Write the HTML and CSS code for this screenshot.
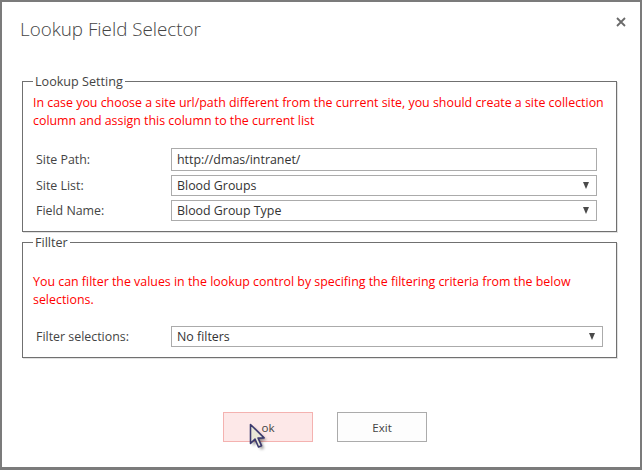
FILE: index.html
```
<!DOCTYPE html>
<html lang="en">
<head>
<meta charset="utf-8">
<title>Lookup Field Selector</title>
<link rel="stylesheet" href="styles.css">
</head>
<body>
<div class="dialog">
  <div class="header">
    <h1 class="title">Lookup Field Selector</h1>
    <button class="close" type="button" aria-label="Close">
      <svg width="10" height="10" viewBox="0 0 10 10"><path d="M1 1L9 9M9 1L1 9" stroke="#6a6a6a" stroke-width="1.8" fill="none"/></svg>
    </button>
  </div>

  <fieldset class="group group-lookup">
    <legend class="legend">Lookup Setting</legend>
    <p class="note note-lookup">In case you choose a site url/path different from the current site, you should create a site collection column and assign this column to the current list</p>
    <div class="form form-lookup">
      <div class="label">Site Path:</div>
      <div class="field field-text">http://dmas/intranet/</div>
      <div class="label">Site List:</div>
      <div class="field field-select"><span>Blood Groups</span><span class="arrow"></span></div>
      <div class="label">Field Name:</div>
      <div class="field field-select"><span>Blood Group Type</span><span class="arrow"></span></div>
    </div>
  </fieldset>

  <fieldset class="group group-filter">
    <legend class="legend">Fillter</legend>
    <p class="note note-filter">You can filter the values in the lookup control by specifing the filtering criteria from the below selections.</p>
    <div class="form form-filter">
      <div class="label">Filter selections:</div>
      <div class="field field-select"><span>No filters</span><span class="arrow"></span></div>
    </div>
  </fieldset>

  <div class="actions">
    <button class="btn btn-ok" type="button">ok</button>
    <button class="btn btn-exit" type="button">Exit</button>
  </div>

  <svg class="cursor" width="22" height="32" viewBox="0 0 22 32">
    <defs>
      <filter id="sh" x="-50%" y="-50%" width="200%" height="200%">
        <feGaussianBlur stdDeviation="1.6"/>
      </filter>
    </defs>
    <path d="M4 4 L4 23 L8.5 18.6 L12 26.5 L15 25.2 L11.6 17.6 L17.6 17.4 Z" fill="#000" opacity="0.45" filter="url(#sh)"/>
    <path d="M1.5 1.5 L1.5 20.5 L6 16.1 L9.5 24 L12.5 22.7 L9.1 15.1 L15.1 14.9 Z" fill="#e9e8d6" stroke="#3c3a6e" stroke-width="1.6" stroke-linejoin="round"/>
  </svg>
</div>
</body>
</html>
```

FILE: styles.css
```
* { box-sizing: border-box; }

html, body {
  margin: 0;
  padding: 0;
  background: #ffffff;
}

body {
  font-family: "Open Sans", "Noto Sans", "Liberation Sans", sans-serif;
  font-size: 12.4px;
  color: #444444;
}

.dialog {
  position: relative;
  width: 642px;
  height: 470px;
  background: #ffffff;
  border: 2px solid #7b7b7b;
  border-bottom-width: 3px;
  overflow: hidden;
}

.header {
  display: flex;
  justify-content: space-between;
  align-items: flex-start;
  padding: 14px 14px 0 18px;
}

.title {
  margin: 0;
  font-size: 18.8px;
  font-weight: 300;
  line-height: 26px;
  color: #444444;
}

.close {
  margin: 1px 0 0 0;
  padding: 0;
  border: 0;
  background: transparent;
  width: 10px;
  height: 10px;
  display: block;
}

.close svg { display: block; }

.group {
  margin: 0 23px 0 20px;
  padding: 4px 10px 10px 10px;
  border: 1px solid #707070;
  box-shadow: 1px 1px 0 #e2e2e2;
  min-width: 0;
}

.group-lookup { margin-top: 31px; padding-top: 4px; padding-right: 8px; }
.group-filter { margin-top: 2px; padding-top: 22px; padding-right: 13px; }

.legend {
  padding: 0 2px;
  margin-left: 0;
  font-size: 12.6px;
  line-height: 17px;
  color: #444444;
}

.note {
  margin: 0;
  color: #ff0000;
  line-height: 17.5px;
}

.form {
  display: grid;
  grid-template-columns: 135px 1fr;
  row-gap: 4px;
  align-items: center;
  padding-left: 3px;
}

.form-lookup { margin-top: 19px; margin-right: 11px; }
.form-filter { margin-top: 18px; }

.label {
  color: #444444;
  line-height: 18px;
}

.field {
  border: 1px solid #ababab;
  background: #ffffff;
  color: #333333;
  padding: 0 0 0 5px;
  display: flex;
  align-items: center;
  justify-content: space-between;
}

.field-text { height: 23px; }

.field-select {
  height: 21px;
  padding-right: 7px;
}

.arrow {
  width: 0;
  height: 0;
  border-left: 3.5px solid transparent;
  border-right: 3.5px solid transparent;
  border-top: 7px solid #4a4a4a;
}

.actions {
  display: flex;
  justify-content: center;
  gap: 24px;
  margin-top: 54px;
  padding-left: 8px;
}

.btn {
  width: 90px;
  height: 30px;
  margin: 0;
  font-family: inherit;
  font-size: 11.6px;
  color: #444444;
  background: #fdfdfd;
  border: 1px solid #ababab;
  padding: 0;
}

.btn-ok {
  background: #fde8e8;
  border-color: #f4b2b0;
}

.cursor {
  position: absolute;
  left: 247px;
  top: 421px;
}
```
